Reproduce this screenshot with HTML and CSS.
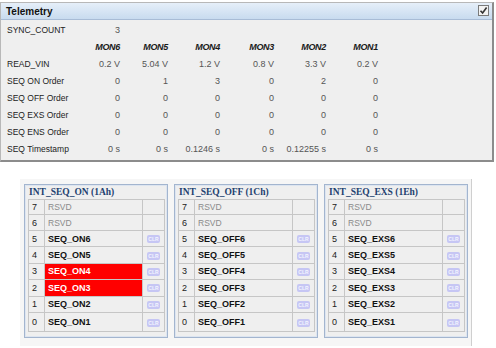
FILE: index.html
```html
<!DOCTYPE html>
<html>
<head>
<meta charset="utf-8">
<link rel="stylesheet" href="styles.css">
</head>
<body>
<div class="panel">
  <div class="panel-head">
    <span class="panel-title">Telemetry</span>
    <span class="chk"><svg width="9" height="9" viewBox="0 0 9 9"><path d="M1.5 4.8 L3.6 7 L7.6 1.6" fill="none" stroke="#333" stroke-width="1.6"/></svg></span>
  </div>
  <div class="grid">
    <div class="lbl">SYNC_COUNT</div><div class="val">3</div><div></div><div></div><div></div><div></div><div></div>
    <div class="lbl"></div><div class="mon">MON6</div><div class="mon">MON5</div><div class="mon">MON4</div><div class="mon">MON3</div><div class="mon">MON2</div><div class="mon">MON1</div>
    <div class="lbl">READ_VIN</div><div class="val">0.2 V</div><div class="val">5.04 V</div><div class="val">1.2 V</div><div class="val">0.8 V</div><div class="val">3.3 V</div><div class="val">0.2 V</div>
    <div class="lbl">SEQ ON Order</div><div class="val">0</div><div class="val">1</div><div class="val">3</div><div class="val">0</div><div class="val">2</div><div class="val">0</div>
    <div class="lbl">SEQ OFF Order</div><div class="val">0</div><div class="val">0</div><div class="val">0</div><div class="val">0</div><div class="val">0</div><div class="val">0</div>
    <div class="lbl">SEQ EXS Order</div><div class="val">0</div><div class="val">0</div><div class="val">0</div><div class="val">0</div><div class="val">0</div><div class="val">0</div>
    <div class="lbl">SEQ ENS Order</div><div class="val">0</div><div class="val">0</div><div class="val">0</div><div class="val">0</div><div class="val">0</div><div class="val">0</div>
    <div class="lbl">SEQ Timestamp</div><div class="val">0 s</div><div class="val">0 s</div><div class="val">0.1246 s</div><div class="val">0 s</div><div class="val">0.12255 s</div><div class="val">0 s</div>
  </div>
</div>

<div class="regs">
  <div class="reg">
    <div class="reg-title">INT_SEQ_ON (1Ah)</div>
    <table class="bits">
      <tr class="r1"><td class="n">7</td><td class="rsvd">RSVD</td><td class="c"></td></tr>
      <tr class="r2"><td class="n">6</td><td class="rsvd">RSVD</td><td class="c"></td></tr>
      <tr><td class="n">5</td><td class="nm">SEQ_ON6</td><td class="c"><span class="clr">CLR</span></td></tr>
      <tr><td class="n">4</td><td class="nm">SEQ_ON5</td><td class="c"><span class="clr">CLR</span></td></tr>
      <tr><td class="n">3</td><td class="nm on">SEQ_ON4</td><td class="c"><span class="clr">CLR</span></td></tr>
      <tr><td class="n">2</td><td class="nm on">SEQ_ON3</td><td class="c"><span class="clr">CLR</span></td></tr>
      <tr><td class="n">1</td><td class="nm">SEQ_ON2</td><td class="c"><span class="clr">CLR</span></td></tr>
      <tr class="last"><td class="n">0</td><td class="nm">SEQ_ON1</td><td class="c"><span class="clr">CLR</span></td></tr>
    </table>
  </div>
  <div class="reg">
    <div class="reg-title">INT_SEQ_OFF (1Ch)</div>
    <table class="bits">
      <tr class="r1"><td class="n">7</td><td class="rsvd">RSVD</td><td class="c"></td></tr>
      <tr class="r2"><td class="n">6</td><td class="rsvd">RSVD</td><td class="c"></td></tr>
      <tr><td class="n">5</td><td class="nm">SEQ_OFF6</td><td class="c"><span class="clr">CLR</span></td></tr>
      <tr><td class="n">4</td><td class="nm">SEQ_OFF5</td><td class="c"><span class="clr">CLR</span></td></tr>
      <tr><td class="n">3</td><td class="nm">SEQ_OFF4</td><td class="c"><span class="clr">CLR</span></td></tr>
      <tr><td class="n">2</td><td class="nm">SEQ_OFF3</td><td class="c"><span class="clr">CLR</span></td></tr>
      <tr><td class="n">1</td><td class="nm">SEQ_OFF2</td><td class="c"><span class="clr">CLR</span></td></tr>
      <tr class="last"><td class="n">0</td><td class="nm">SEQ_OFF1</td><td class="c"><span class="clr">CLR</span></td></tr>
    </table>
  </div>
  <div class="reg">
    <div class="reg-title">INT_SEQ_EXS (1Eh)</div>
    <table class="bits">
      <tr class="r1"><td class="n">7</td><td class="rsvd">RSVD</td><td class="c"></td></tr>
      <tr class="r2"><td class="n">6</td><td class="rsvd">RSVD</td><td class="c"></td></tr>
      <tr><td class="n">5</td><td class="nm">SEQ_EXS6</td><td class="c"><span class="clr">CLR</span></td></tr>
      <tr><td class="n">4</td><td class="nm">SEQ_EXS5</td><td class="c"><span class="clr">CLR</span></td></tr>
      <tr><td class="n">3</td><td class="nm">SEQ_EXS4</td><td class="c"><span class="clr">CLR</span></td></tr>
      <tr><td class="n">2</td><td class="nm">SEQ_EXS3</td><td class="c"><span class="clr">CLR</span></td></tr>
      <tr><td class="n">1</td><td class="nm">SEQ_EXS2</td><td class="c"><span class="clr">CLR</span></td></tr>
      <tr class="last"><td class="n">0</td><td class="nm">SEQ_EXS1</td><td class="c"><span class="clr">CLR</span></td></tr>
    </table>
  </div>
</div>
</body>
</html>
```

FILE: styles.css
```css
html, body {
  margin: 0;
  padding: 0;
  background: #ffffff;
  font-family: "Liberation Sans", Arial, sans-serif;
}

.panel {
  margin: 2px 2px 0 0;
  height: 160px;
  box-sizing: border-box;
  background: #efefef;
  border: 1px solid #b8b8b8;
  border-right: 2px solid #8c8c8c;
  border-bottom: 2px solid #8c8c8c;
}

.panel-head {
  position: relative;
  height: 17px;
  box-sizing: border-box;
  background: linear-gradient(#e6eff9, #c8dbef);
  border-bottom: 1px solid #a8bcd6;
  display: flex;
  align-items: center;
  padding-left: 5px;
}

.panel-title {
  font-weight: bold;
  font-size: 10px;
  color: #111;
}

.chk {
  position: absolute;
  right: 3px;
  top: 2px;
  width: 11px;
  height: 11px;
  box-sizing: border-box;
  border: 1px solid #7a7a7a;
  background: #f2f2f2;
  display: flex;
  align-items: center;
  justify-content: center;
}

.grid {
  display: grid;
  grid-template-columns: 63px 50px 48px 52px 54px 52px 52px;
  grid-auto-rows: 17px;
  padding: 1px 0 0 6px;
  font-size: 8.5px;
}

.grid > div {
  display: flex;
  align-items: center;
}

.lbl {
  color: #222;
}

.val {
  justify-content: flex-end;
  color: #555;
  font-size: 9px;
}

.mon {
  justify-content: flex-end;
  font-weight: bold;
  font-style: italic;
  font-size: 9px;
  color: #1a1a1a;
  letter-spacing: -0.3px;
}

.regs {
  margin: 17px 0 0 20px;
  width: 452px;
  box-sizing: border-box;
  padding: 5px 4px 8px 4px;
  background: #f6f6f6;
  border-right: 1px solid #cfcfcf;
  display: flex;
  gap: 6px;
}

.reg {
  width: 144px;
  height: 154px;
  box-sizing: border-box;
  border: 1px solid #a3b5cf;
  box-shadow: inset 0 0 0 1px #dde5f0;
  background: #efefef;
  padding: 0 2px 0 3px;
}

.reg-title {
  height: 14px;
  line-height: 15px;
  font-family: "Liberation Serif", "Times New Roman", serif;
  font-weight: bold;
  font-size: 9.5px;
  color: #23416f;
  padding-left: 1px;
}

.bits {
  border-collapse: collapse;
  width: 137px;
  font-size: 9px;
  border: 1px solid #bdbdbd;
}

.bits td {
  border: 1px solid #c6c6c6;
  padding: 0;
  height: 16.4px;
  box-sizing: border-box;
}

.bits tr.r1 td { height: 15px; }
.bits tr.r2 td { height: 16px; }
.bits tr.last td { height: 19px; }

.n {
  width: 16px;
  padding-left: 3px !important;
  color: #222;
}

.rsvd {
  color: #8a8a8a;
  font-size: 8.5px;
  padding-left: 3px !important;
}

.nm {
  font-weight: bold;
  color: #111;
  padding-left: 3px !important;
}

.nm.on {
  background: #ff0000;
  color: #ffffff;
}

.c {
  width: 22px;
  text-align: center;
}

.clr {
  display: inline-block;
  width: 13px;
  height: 8px;
  line-height: 8px;
  border-radius: 2px;
  background: #c6c6f4;
  color: #f4f4ff;
  font-size: 5px;
  font-weight: bold;
  vertical-align: middle;
}
```
